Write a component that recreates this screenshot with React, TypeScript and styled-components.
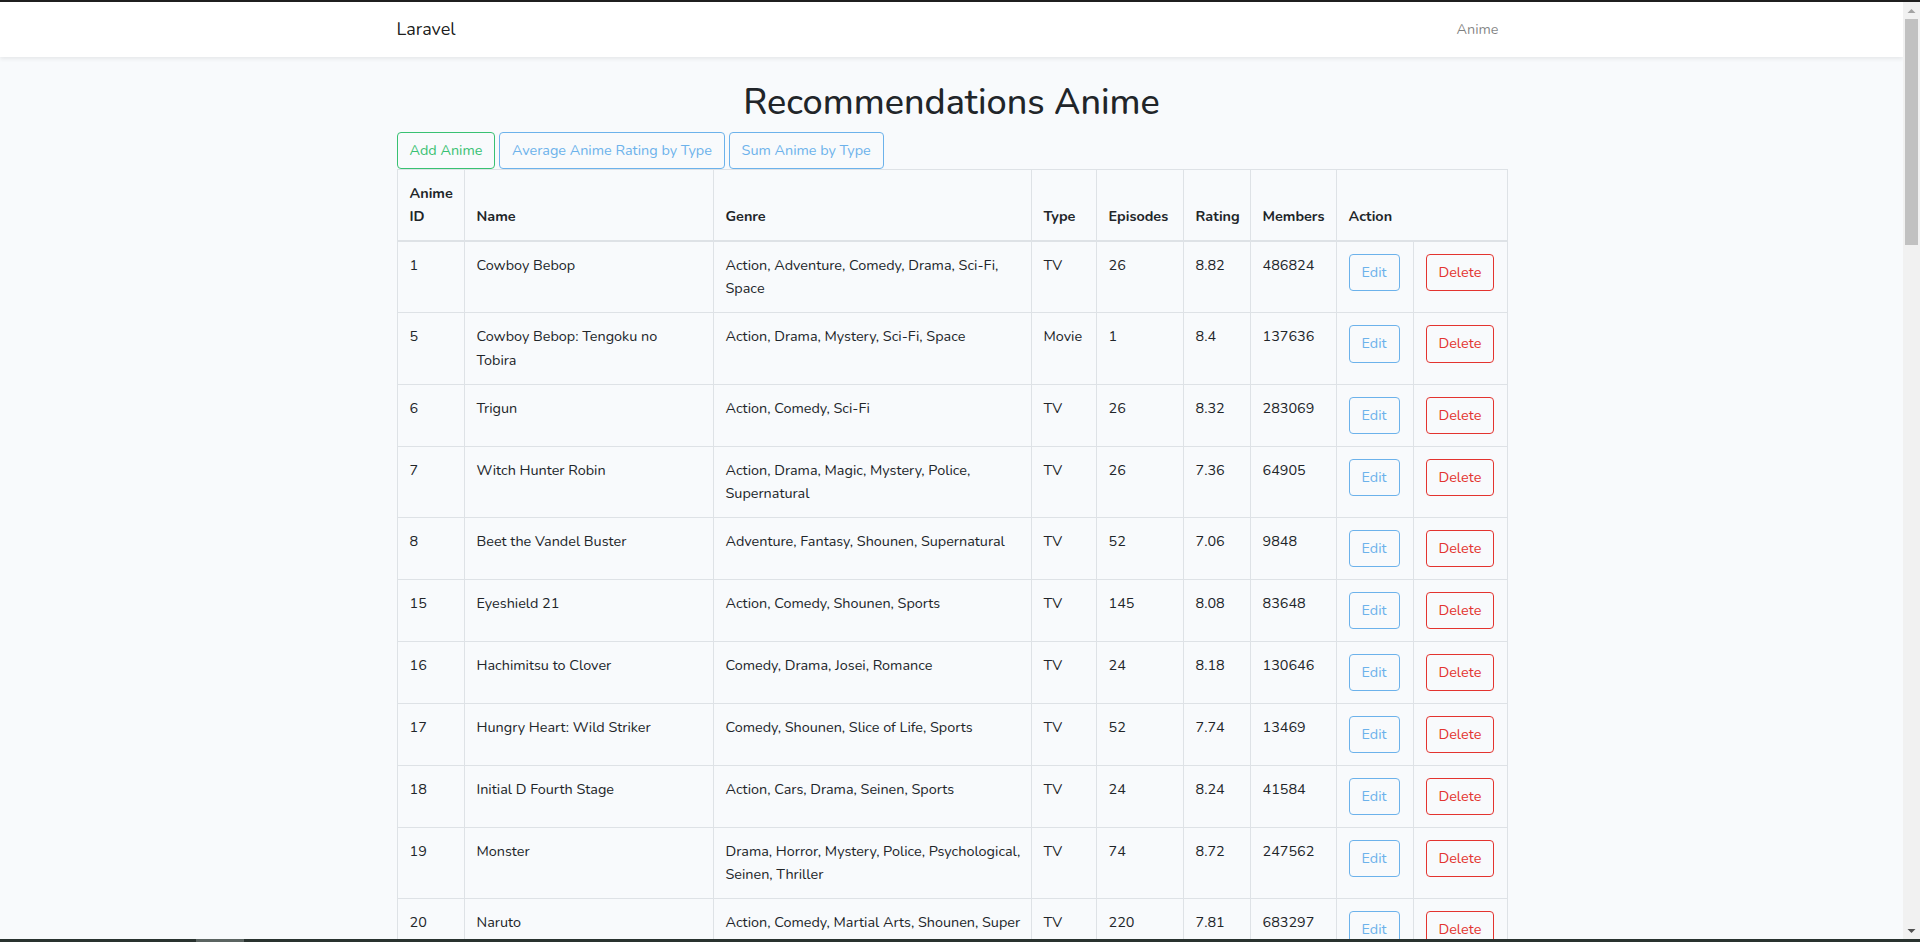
import React from "react";
import styled, { createGlobalStyle } from "styled-components";

const GlobalStyle = createGlobalStyle`
  *, *::before, *::after { box-sizing: border-box; }
  html, body { margin: 0; padding: 0; height: 100%; overflow: hidden; }
  body {
    font-family: "Nunito", "Lato", "Liberation Sans", sans-serif;
    font-size: 14.4px;
    line-height: 1.6;
    color: #212529;
    background: #f8fafc;
  }
  #root { height: 100%; }
`;

const Frame = styled.div`
  height: 100vh;
  display: flex;
  flex-direction: column;
  overflow: hidden;
`;

const TopBand = styled.div`
  height: 2px;
  flex: none;
  background: #1f1f1f;
`;

const BottomBand = styled.div`
  height: 3px;
  flex: none;
  background: #29322f;
  display: flex;
  padding-left: 196px;
`;

const BandSegment = styled.div`
  width: 48px;
  background: #5b6461;
`;

const Middle = styled.div`
  flex: 1;
  min-height: 0;
  display: flex;
`;

const Viewport = styled.div`
  flex: 1;
  min-width: 0;
  overflow: hidden;
  background: #f8fafc;
`;

const ScrollTrack = styled.div`
  width: 17px;
  flex: none;
  background: #f1f1f1;
  display: flex;
  flex-direction: column;
`;

const ArrowBox = styled.div`
  height: 17px;
  flex: none;
  display: flex;
  align-items: center;
  justify-content: center;
`;

const Thumb = styled.div`
  height: 226px;
  margin: 0 2px;
  background: #c1c1c1;
  flex: none;
`;

const TrackSpacer = styled.div`
  flex: 1;
`;

const Navbar = styled.nav`
  position: relative;
  z-index: 1;
  background: #fff;
  box-shadow: 0 0.125rem 0.25rem rgba(0, 0, 0, 0.075);
  padding: 8px 16px;
`;

const Container = styled.div`
  max-width: 1140px;
  margin: 0 auto;
  padding: 0 15px;
`;

const NavInner = styled(Container)`
  display: flex;
  align-items: center;
  justify-content: space-between;
`;

const Brand = styled.a`
  font-size: 18px;
  line-height: 1.6;
  padding: 5.12px 0;
  margin-right: 16px;
  color: rgba(0, 0, 0, 0.9);
  text-decoration: none;
  white-space: nowrap;
`;

const NavLink = styled.a`
  padding: 8px;
  color: rgba(0, 0, 0, 0.5);
  text-decoration: none;
`;

const Main = styled.main`
  padding: 24px 0;
`;

const Title = styled.h1`
  margin: 0 0 8px;
  text-align: center;
  font-size: 36px;
  font-weight: 500;
  line-height: 1.2;
  color: #212529;
`;

const ButtonRow = styled.div`
  display: block;
  white-space: nowrap;
  font-size: 14.4px;
  line-height: 1.6;
  height: 37.04px;
`;

const tones: Record<string, string> = {
  success: "#38c172",
  info: "#6cb2eb",
  danger: "#e3342f",
};

const OutlineButton = styled.a<{ $tone: "success" | "info" | "danger" }>`
  display: inline-block;
  vertical-align: middle;
  padding: 6px 12px;
  font-size: 14.4px;
  line-height: 1.6;
  border: 1px solid ${(p) => tones[p.$tone]};
  border-radius: 4px;
  color: ${(p) => tones[p.$tone]};
  background: transparent;
  text-decoration: none;
  white-space: nowrap;
  cursor: pointer;
`;

const Table = styled.table`
  width: 100%;
  table-layout: fixed;
  border-collapse: collapse;
  border: 1px solid #dee2e6;
  margin-bottom: 16px;
  color: #212529;
`;

const HeadCell = styled.th`
  padding: 12px;
  border: 1px solid #dee2e6;
  border-bottom-width: 2px;
  vertical-align: bottom;
  text-align: left;
  font-weight: 700;
`;

const Cell = styled.td`
  padding: 12px;
  border: 1px solid #dee2e6;
  vertical-align: top;
`;

const Line = styled.span`
  display: block;
  white-space: nowrap;
`;

type Row = {
  id: number;
  name: string[];
  genre: string[];
  type: string;
  episodes: number;
  rating: string;
  members: number;
};

const rows: Row[] = [
  { id: 1, name: ["Cowboy Bebop"], genre: ["Action, Adventure, Comedy, Drama, Sci-Fi,", "Space"], type: "TV", episodes: 26, rating: "8.82", members: 486824 },
  { id: 5, name: ["Cowboy Bebop: Tengoku no", "Tobira"], genre: ["Action, Drama, Mystery, Sci-Fi, Space"], type: "Movie", episodes: 1, rating: "8.4", members: 137636 },
  { id: 6, name: ["Trigun"], genre: ["Action, Comedy, Sci-Fi"], type: "TV", episodes: 26, rating: "8.32", members: 283069 },
  { id: 7, name: ["Witch Hunter Robin"], genre: ["Action, Drama, Magic, Mystery, Police,", "Supernatural"], type: "TV", episodes: 26, rating: "7.36", members: 64905 },
  { id: 8, name: ["Beet the Vandel Buster"], genre: ["Adventure, Fantasy, Shounen, Supernatural"], type: "TV", episodes: 52, rating: "7.06", members: 9848 },
  { id: 15, name: ["Eyeshield 21"], genre: ["Action, Comedy, Shounen, Sports"], type: "TV", episodes: 145, rating: "8.08", members: 83648 },
  { id: 16, name: ["Hachimitsu to Clover"], genre: ["Comedy, Drama, Josei, Romance"], type: "TV", episodes: 24, rating: "8.18", members: 130646 },
  { id: 17, name: ["Hungry Heart: Wild Striker"], genre: ["Comedy, Shounen, Slice of Life, Sports"], type: "TV", episodes: 52, rating: "7.74", members: 13469 },
  { id: 18, name: ["Initial D Fourth Stage"], genre: ["Action, Cars, Drama, Seinen, Sports"], type: "TV", episodes: 24, rating: "8.24", members: 41584 },
  { id: 19, name: ["Monster"], genre: ["Drama, Horror, Mystery, Police, Psychological,", "Seinen, Thriller"], type: "TV", episodes: 74, rating: "8.72", members: 247562 },
  { id: 20, name: ["Naruto"], genre: ["Action, Comedy, Martial Arts, Shounen, Super", "Power"], type: "TV", episodes: 220, rating: "7.81", members: 683297 },
  { id: 21, name: ["One Piece"], genre: ["Action, Adventure, Comedy, Drama, Fantasy,", "Shounen, Super Power"], type: "TV", episodes: 0, rating: "8.58", members: 504862 },
];

const colWidths = [67, 249, 318, 65, 87, 67, 86, 77, 94];

const Lines = ({ items }: { items: string[] }) => (
  <>
    {items.map((t, i) => (
      <Line key={i}>{t}</Line>
    ))}
  </>
);

const TriangleUp = () => (
  <svg width="9" height="6" viewBox="0 0 9 6">
    <path d="M0.5 5 L4.5 1 L8.5 5 Z" fill="#a3a3a3" />
  </svg>
);

const TriangleDown = () => (
  <svg width="9" height="6" viewBox="0 0 9 6">
    <path d="M0.5 1 L4.5 5 L8.5 1 Z" fill="#505050" />
  </svg>
);

export default function App() {
  return (
    <>
      <GlobalStyle />
      <Frame>
        <TopBand />
        <Middle>
          <Viewport>
            <Navbar>
              <NavInner>
                <Brand href="#">Laravel</Brand>
                <NavLink href="#">Anime</NavLink>
              </NavInner>
            </Navbar>
            <Main>
              <Container>
                <Title>Recommendations Anime</Title>
                <ButtonRow>
                  <OutlineButton $tone="success">Add Anime</OutlineButton>{" "}
                  <OutlineButton $tone="info">Average Anime Rating by Type</OutlineButton>{" "}
                  <OutlineButton $tone="info">Sum Anime by Type</OutlineButton>
                </ButtonRow>
                <Table>
                  <colgroup>
                    {colWidths.map((w, i) => (
                      <col key={i} style={{ width: w }} />
                    ))}
                  </colgroup>
                  <thead>
                    <tr>
                      <HeadCell>
                        <Lines items={["Anime", "ID"]} />
                      </HeadCell>
                      <HeadCell>Name</HeadCell>
                      <HeadCell>Genre</HeadCell>
                      <HeadCell>Type</HeadCell>
                      <HeadCell>Episodes</HeadCell>
                      <HeadCell>Rating</HeadCell>
                      <HeadCell>Members</HeadCell>
                      <HeadCell colSpan={2}>Action</HeadCell>
                    </tr>
                  </thead>
                  <tbody>
                    {rows.map((r) => (
                      <tr key={r.id}>
                        <Cell>{r.id}</Cell>
                        <Cell>
                          <Lines items={r.name} />
                        </Cell>
                        <Cell>
                          <Lines items={r.genre} />
                        </Cell>
                        <Cell>{r.type}</Cell>
                        <Cell>{r.episodes}</Cell>
                        <Cell>{r.rating}</Cell>
                        <Cell>{r.members}</Cell>
                        <Cell>
                          <OutlineButton $tone="info">Edit</OutlineButton>
                        </Cell>
                        <Cell>
                          <OutlineButton $tone="danger">Delete</OutlineButton>
                        </Cell>
                      </tr>
                    ))}
                  </tbody>
                </Table>
              </Container>
            </Main>
          </Viewport>
          <ScrollTrack>
            <ArrowBox>
              <TriangleUp />
            </ArrowBox>
            <Thumb />
            <TrackSpacer />
            <ArrowBox>
              <TriangleDown />
            </ArrowBox>
          </ScrollTrack>
        </Middle>
        <BottomBand>
          <BandSegment />
        </BottomBand>
      </Frame>
    </>
  );
}
